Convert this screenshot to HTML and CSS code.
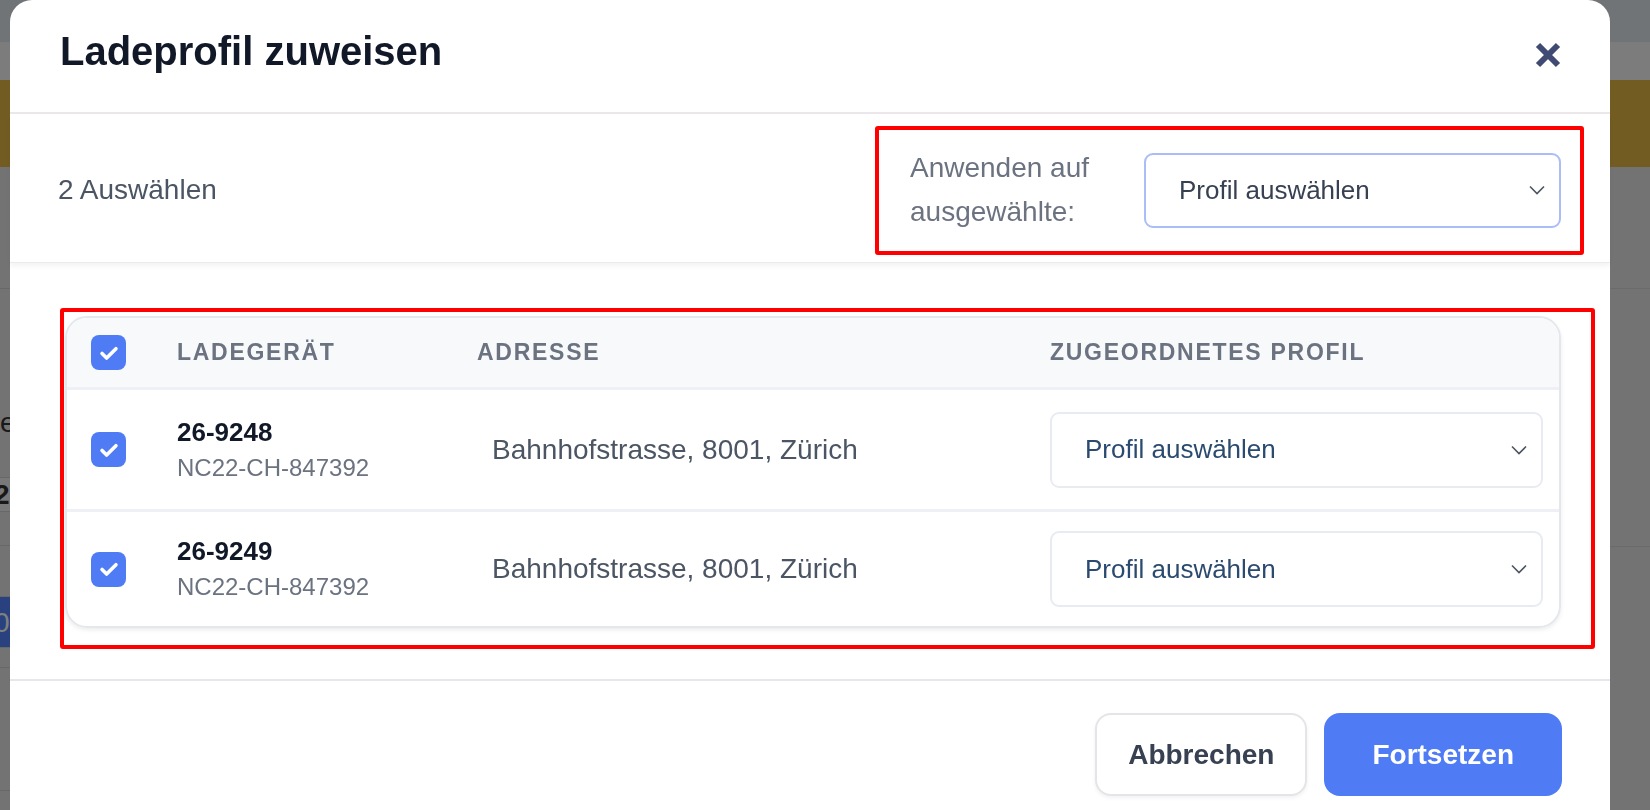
FILE: index.html
```html
<!DOCTYPE html>
<html lang="de">
<head>
	<title>Ladeprofil zuweisen</title>
	<meta charset="utf-8">
	<link rel="stylesheet" href="styles.css">
</head>
<body>
	<!-- page behind the dialog -->
	<div class="page">
		<div class="topbar"></div>
		<div class="subbar"></div>
		<div class="notice"></div>
		<div class="page-main">
			<div class="side-list">
				<div class="side-row tall"></div>
				<div class="side-row big"><span>e</span></div>
				<div class="side-row small shaded"><b>2</b></div>
				<div class="side-row small"></div>
				<div class="side-row mid"></div>
				<div class="side-row mid"><i class="chip">0</i></div>
				<div class="side-row tiny"></div>
				<div class="side-row rest"></div>
			</div>
			<div class="page-content">
				<div class="content-row first"></div>
				<div class="content-row second"></div>
			</div>
		</div>
	</div>

	<div class="backdrop"></div>

	<div class="modal">
		<div class="modal-header">
			<h1 class="modal-title">Ladeprofil zuweisen</h1>
			<button class="close" aria-label="Schliessen">
				<svg width="26" height="26" viewBox="0 0 26 26"><path d="M3 3L23 23M23 3L3 23" stroke="#3f4b73" stroke-width="6" fill="none"/></svg>
			</button>
		</div>

		<div class="select-bar">
			<div class="count">2 Auswählen</div>
			<div class="highlight bulk">
				<label class="bulk-label">Anwenden auf<br>ausgewählte:</label>
				<div class="select select-focus">
					<span>Profil auswählen</span>
					<svg width="16" height="10" viewBox="0 0 16 10"><path d="M1 1.5l7 7 7-7" stroke="#4b5563" stroke-width="1.6" fill="none"/></svg>
				</div>
			</div>
		</div>

		<div class="modal-body">
			<div class="highlight table-wrap">
				<div class="card">
					<div class="grid head">
						<div class="cell"><span class="check"><svg width="24" height="24" viewBox="0 0 20 20"><path d="M4.2 10.4l3.8 3.8L15.8 6.4" stroke="#fff" stroke-width="3" stroke-linecap="round" stroke-linejoin="round" fill="none"/></svg></span></div>
						<div class="cell th">Ladegerät</div>
						<div class="cell th">Adresse</div>
						<div class="cell th">Zugeordnetes Profil</div>
					</div>
					<div class="grid row">
						<div class="cell"><span class="check"><svg width="24" height="24" viewBox="0 0 20 20"><path d="M4.2 10.4l3.8 3.8L15.8 6.4" stroke="#fff" stroke-width="3" stroke-linecap="round" stroke-linejoin="round" fill="none"/></svg></span></div>
						<div class="cell charger">
							<div class="charger-id">26-9248</div>
							<div class="charger-serial">NC22-CH-847392</div>
						</div>
						<div class="cell address">Bahnhofstrasse, 8001, Zürich</div>
						<div class="cell profile">
							<div class="select select-row">
								<span>Profil auswählen</span>
								<svg width="16" height="10" viewBox="0 0 16 10"><path d="M1 1.5l7 7 7-7" stroke="#4b5563" stroke-width="1.6" fill="none"/></svg>
							</div>
						</div>
					</div>
					<div class="grid row">
						<div class="cell"><span class="check"><svg width="24" height="24" viewBox="0 0 20 20"><path d="M4.2 10.4l3.8 3.8L15.8 6.4" stroke="#fff" stroke-width="3" stroke-linecap="round" stroke-linejoin="round" fill="none"/></svg></span></div>
						<div class="cell charger">
							<div class="charger-id">26-9249</div>
							<div class="charger-serial">NC22-CH-847392</div>
						</div>
						<div class="cell address">Bahnhofstrasse, 8001, Zürich</div>
						<div class="cell profile">
							<div class="select select-row">
								<span>Profil auswählen</span>
								<svg width="16" height="10" viewBox="0 0 16 10"><path d="M1 1.5l7 7 7-7" stroke="#4b5563" stroke-width="1.6" fill="none"/></svg>
							</div>
						</div>
					</div>
				</div>
			</div>
		</div>

		<div class="modal-footer">
			<button class="btn btn-cancel">Abbrechen</button>
			<button class="btn btn-primary">Fortsetzen</button>
		</div>
	</div>
</body>
</html>
```

FILE: styles.css
```css
* {
	box-sizing: border-box;
}
body {
	margin: 0;
	height: 810px;
	overflow: hidden;
	font-family: "Liberation Sans", Arial, sans-serif;
	background: #e6e6e6;
}

/* page under the dialog */
.page {
	height: 810px;
}
.topbar {
	height: 42px;
	background: #e0e8ec;
}
.subbar {
	height: 38px;
	background: #f8f8f8;
}
.notice {
	height: 87px;
	background: #e6b844;
}
.page-main {
	display: grid;
	grid-template-columns: 300px 1fr;
}
.side-row {
	border-bottom: 1px solid #d0d0d0;
	font-size: 28px;
	color: #333;
	display: flex;
	align-items: center;
}
.side-row.tall { height: 122px; }
.side-row.big { height: 189px; padding-top: 80px; }
.side-row.small { height: 34px; }
.side-row.shaded { background: #f2f2f2; }
.side-row.mid { height: 51px; }
.side-row.tiny { height: 20px; }
.side-row.rest { height: 123px; }
.side-row b {
	font-weight: 700;
	margin-left: -6px;
}
.chip {
	display: block;
	width: 100%;
	height: 100%;
	background: #5482fe;
	color: #fff;
	font-style: normal;
	line-height: 51px;
	text-indent: -6px;
}
.content-row {
	border-bottom: 1px solid #d6d6d6;
}
.content-row.first { height: 122px; }
.content-row.second { height: 258px; }

.backdrop {
	position: fixed;
	inset: 0;
	background: rgba(0, 0, 0, 0.5);
}

/* dialog */
.modal {
	position: fixed;
	top: 0;
	left: 10px;
	width: 1600px;
	height: 840px;
	background: #fff;
	border-radius: 22px;
}
.modal-header {
	height: 114px;
	display: flex;
	align-items: center;
	justify-content: space-between;
	padding: 0 49px 10px 50px;
	border-bottom: 2px solid #ebe7ea;
}
.modal-title {
	margin: 0;
	font-size: 40px;
	font-weight: 700;
	color: #111827;
}
.close {
	border: 0;
	background: none;
	padding: 0;
	width: 26px;
	height: 26px;
	margin-top: 8px;
}

.select-bar {
	height: 149px;
	display: flex;
	align-items: center;
	justify-content: space-between;
	padding: 4px 26px 0 48px;
	border-bottom: 1px solid #ecebec;
	box-shadow: 0 3px 5px rgba(0, 0, 0, 0.05);
}
.count {
	font-size: 28px;
	color: #4b5563;
}
.highlight {
	border: 4px solid #ff0000;
	border-radius: 3px;
}
.bulk {
	display: flex;
	align-items: center;
	gap: 54px;
	height: 129px;
	padding: 0 19px 0 31px;
}
.bulk-label {
	font-size: 28px;
	line-height: 44px;
	color: #6b7280;
	width: 180px;
}
.select {
	display: flex;
	align-items: center;
	justify-content: space-between;
	font-size: 26px;
	padding: 0 14px 0 33px;
	border-radius: 9px;
	background: #fff;
}
.select-focus {
	width: 417px;
	height: 75px;
	border: 2px solid #aabdf6;
	color: #374151;
}
.select-row {
	height: 76px;
	border: 2px solid #e8ebf1;
	color: #2b4a6f;
}

.modal-body {
	padding: 45px 15px 30px 50px;
}
.table-wrap {
	padding: 4px 30px 17px 1px;
}
.card {
	border: 2px solid #e4e7ec;
	border-radius: 22px;
	overflow: hidden;
	box-shadow: 0 2px 4px rgba(0, 0, 0, 0.08);
}
.grid {
	display: grid;
	grid-template-columns: 110px 300px 573px 1fr;
	align-items: center;
}
.head {
	height: 72px;
	background: #f8f9fb;
	border-bottom: 3px solid #eef0f5;
}
.row {
	height: 119px;
}
.row + .row {
	height: 117px;
	border-top: 3px solid #eef0f5;
}
.cell:first-child {
	padding-left: 24px;
}
.th {
	font-size: 23px;
	font-weight: 700;
	text-transform: uppercase;
	letter-spacing: 0.075em;
	color: #6b7280;
}
.check {
	display: flex;
	align-items: center;
	justify-content: center;
	width: 35px;
	height: 35px;
	border-radius: 8px;
	background: #4f7cf5;
}
.charger-id {
	font-size: 26px;
	font-weight: 700;
	color: #111827;
	line-height: 36px;
}
.charger-serial {
	font-size: 24px;
	color: #6b7280;
	line-height: 36px;
}
.address {
	font-size: 28px;
	color: #4b5563;
	padding-left: 15px;
}
.profile {
	padding-right: 16px;
}

.modal-footer {
	display: flex;
	justify-content: flex-end;
	gap: 17px;
	padding: 32px 48px;
	border-top: 2px solid #e5e7eb;
}
.btn {
	height: 83px;
	border-radius: 16px;
	font-family: inherit;
	font-size: 28px;
	font-weight: 700;
}
.btn-cancel {
	padding: 0 31px;
	background: #fff;
	color: #374151;
	border: 2px solid #e3e5e9;
	box-shadow: 0 2px 4px rgba(0, 0, 0, 0.06);
}
.btn-primary {
	padding: 0 48px;
	background: #4f7cf5;
	color: #fff;
	border: 0;
}
```
